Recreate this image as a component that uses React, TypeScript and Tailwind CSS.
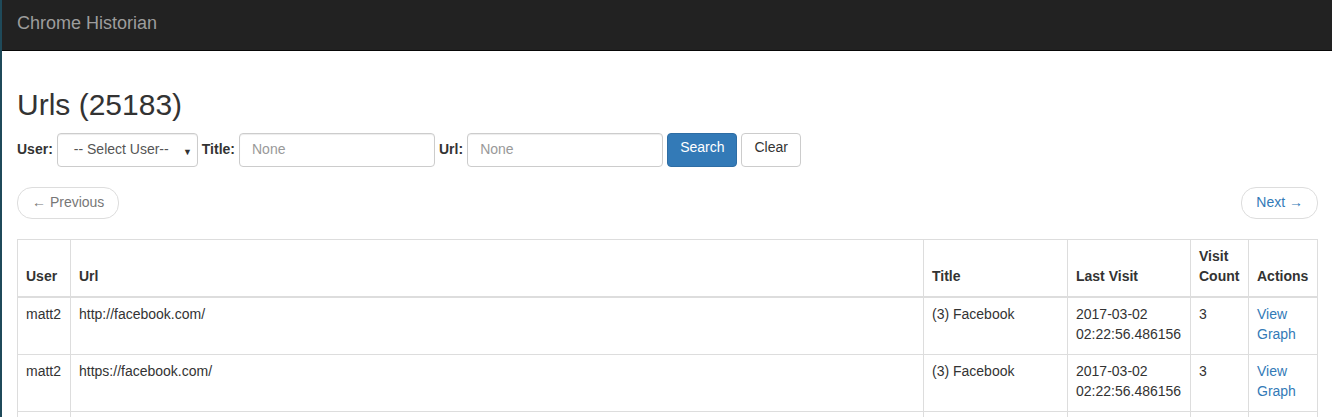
import React from 'react';

type Row = { user: string; url: string; title: string; lastVisit: [string, string]; count: number };

const rows: Row[] = [
  { user: 'matt2', url: 'http://facebook.com/', title: '(3) Facebook', lastVisit: ['2017-03-02', '02:22:56.486156'], count: 3 },
  { user: 'matt2', url: 'https://facebook.com/', title: '(3) Facebook', lastVisit: ['2017-03-02', '02:22:56.486156'], count: 3 },
  { user: 'matt2', url: 'https://www.facebook.com/', title: '(3) Facebook', lastVisit: ['2017-03-02', '02:22:56.486156'], count: 3 },
];

const cell = 'border border-[#ddd] px-2 pt-[6px] pb-[10px] align-top leading-5';
const head = 'border border-[#ddd] border-b-2 px-2 pt-[6px] pb-[10px] align-bottom leading-5 font-bold text-left';
const input =
  'w-[196px] h-[34px] border border-[#ccc] rounded px-3 pb-[3px] placeholder-[#999] shadow-[inset_0_1px_1px_rgba(0,0,0,0.075)] outline-none';

const App: React.FC = () => {
  return (
    <div
      className="min-h-screen bg-white text-[14px] leading-5 text-[#333] border-l-2 border-[#1f4a5a]"
      style={{ fontFamily: '"Liberation Sans", Arial, sans-serif' }}
    >
      {/* Navbar */}
      <nav className="h-[51px] bg-[#222] border-b border-[#080808]">
        <div className="px-[15px] h-[50px] flex items-center pb-1">
          <span className="text-[18px] leading-5 text-[#9d9d9d]">Chrome Historian</span>
        </div>
      </nav>

      <div className="pl-[15px] pr-[14px] pt-5">
        <h2 className="mt-5 mb-[15px] text-[30px] leading-[27px] font-normal">Urls (25183)</h2>

        {/* Filter form */}
        <form className="flex items-center gap-1" onSubmit={e => e.preventDefault()}>
          <label className="font-bold pb-[2px]">User:</label>
          <div className="relative w-[141px] h-[34px] border border-[#ccc] rounded shadow-[inset_0_1px_1px_rgba(0,0,0,0.075)] flex items-center pl-4 pb-[3px] text-[#555]">
            <span>-- Select User--</span>
            <span className="absolute right-[5px] top-[8px] text-[9px] text-[#333]">▼</span>
          </div>
          <label className="font-bold pb-[2px]">Title:</label>
          <input placeholder="None" className={input} />
          <label className="font-bold pb-[2px]">Url:</label>
          <input placeholder="None" className={input} />
          <button className="h-[34px] px-3 pb-[6px] rounded bg-[#337ab7] border border-[#2e6da4] text-white">Search</button>
          <button className="h-[34px] px-3 pb-[6px] rounded bg-white border border-[#ccc] text-[#333]">Clear</button>
        </form>

        {/* Pager */}
        <div className="flex justify-between my-5">
          <span className="h-8 px-[14px] pt-[4px] border border-[#ddd] rounded-[15px] text-[#777]">← Previous</span>
          <a href="#" className="h-8 px-[14px] pt-[4px] border border-[#ddd] rounded-[15px] text-[#337ab7]">Next →</a>
        </div>

        <table className="w-full border-collapse border border-[#ddd]">
          <thead>
            <tr>
              <th className={`${head} w-[53px]`}>User</th>
              <th className={head}>Url</th>
              <th className={`${head} w-[144px]`}>Title</th>
              <th className={`${head} w-[123px]`}>Last Visit</th>
              <th className={`${head} w-[58px]`}>Visit Count</th>
              <th className={`${head} w-[69px]`}>Actions</th>
            </tr>
          </thead>
          <tbody>
            {rows.map((r, i) => (
              <tr key={i}>
                <td className={cell}>{r.user}</td>
                <td className={cell}>{r.url}</td>
                <td className={cell}>{r.title}</td>
                <td className={cell}>
                  {r.lastVisit[0]}
                  <br />
                  {r.lastVisit[1]}
                </td>
                <td className={cell}>{r.count}</td>
                <td className={cell}>
                  <a href="#" className="text-[#337ab7]">View Graph</a>
                </td>
              </tr>
            ))}
          </tbody>
        </table>
      </div>
    </div>
  );
};

export default App;
